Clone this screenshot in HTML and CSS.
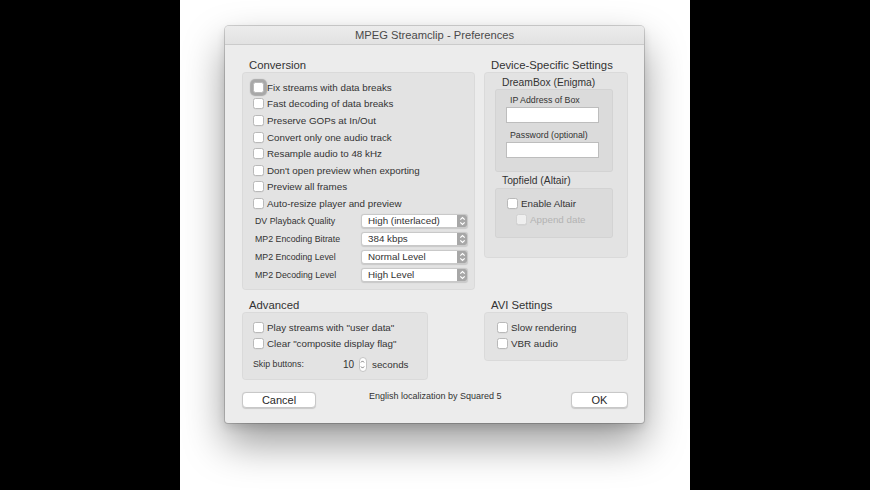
FILE: index.html
```html
<!DOCTYPE html>
<html lang="en">
<head>
    <meta charset="UTF-8">
    <title>MPEG Streamclip - Preferences</title>
    <link rel="stylesheet" href="styles.css">
</head>
<body>
<div class="stage">
    <div class="side"></div>

    <div class="canvas">
        <!-- Preferences window -->
        <div class="window">
            <div class="titlebar">MPEG Streamclip - Preferences</div>

            <div class="content">
                <div class="groups">

                    <!-- Conversion -->
                    <section class="group">
                        <h2>Conversion</h2>
                        <div class="box conversion">
                            <div class="row"><span class="check focus"></span>Fix streams with data breaks</div>
                            <div class="row"><span class="check"></span>Fast decoding of data breaks</div>
                            <div class="row"><span class="check"></span>Preserve GOPs at In/Out</div>
                            <div class="row"><span class="check"></span>Convert only one audio track</div>
                            <div class="row"><span class="check"></span>Resample audio to 48 kHz</div>
                            <div class="row"><span class="check"></span>Don't open preview when exporting</div>
                            <div class="row"><span class="check"></span>Preview all frames</div>
                            <div class="row"><span class="check"></span>Auto-resize player and preview</div>

                            <div class="popup-row">
                                <label>DV Playback Quality</label>
                                <div class="popup"><span>High (interlaced)</span>
                                    <svg class="arrows" viewBox="0 0 11 14"><path d="M3.3 5.6L5.5 3.5L7.7 5.6M3.3 8.4L5.5 10.5L7.7 8.4"/></svg>
                                </div>
                            </div>
                            <div class="popup-row">
                                <label>MP2 Encoding Bitrate</label>
                                <div class="popup"><span>384 kbps</span>
                                    <svg class="arrows" viewBox="0 0 11 14"><path d="M3.3 5.6L5.5 3.5L7.7 5.6M3.3 8.4L5.5 10.5L7.7 8.4"/></svg>
                                </div>
                            </div>
                            <div class="popup-row">
                                <label>MP2 Encoding Level</label>
                                <div class="popup"><span>Normal Level</span>
                                    <svg class="arrows" viewBox="0 0 11 14"><path d="M3.3 5.6L5.5 3.5L7.7 5.6M3.3 8.4L5.5 10.5L7.7 8.4"/></svg>
                                </div>
                            </div>
                            <div class="popup-row">
                                <label>MP2 Decoding Level</label>
                                <div class="popup"><span>High Level</span>
                                    <svg class="arrows" viewBox="0 0 11 14"><path d="M3.3 5.6L5.5 3.5L7.7 5.6M3.3 8.4L5.5 10.5L7.7 8.4"/></svg>
                                </div>
                            </div>
                        </div>
                    </section>

                    <!-- Device-Specific Settings -->
                    <section class="group">
                        <h2>Device-Specific Settings</h2>
                        <div class="box device">
                            <h3>DreamBox (Enigma)</h3>
                            <div class="subbox dreambox">
                                <div class="field-label">IP Address of Box</div>
                                <div class="field"></div>
                                <div class="field-label second">Password (optional)</div>
                                <div class="field"></div>
                            </div>

                            <h3 class="topfield">Topfield (Altair)</h3>
                            <div class="subbox altair">
                                <div class="row"><span class="check"></span>Enable Altair</div>
                                <div class="row disabled indent"><span class="check"></span>Append date</div>
                            </div>
                        </div>
                    </section>

                    <!-- Advanced -->
                    <section class="group">
                        <h2>Advanced</h2>
                        <div class="box advanced">
                            <div class="row"><span class="check"></span>Play streams with "user data"</div>
                            <div class="row"><span class="check"></span>Clear "composite display flag"</div>
                            <div class="skip-row">
                                <span class="skip-label">Skip buttons:</span>
                                <span class="skip-value">10</span>
                                <span class="stepper">
                                    <svg viewBox="0 0 8 15"><path d="M2.2 5.2L4 3.4L5.8 5.2M2.2 9.8L4 11.6L5.8 9.8"/></svg>
                                </span>
                                <span class="skip-unit">seconds</span>
                            </div>
                        </div>
                    </section>

                    <!-- AVI Settings -->
                    <section class="group">
                        <h2>AVI Settings</h2>
                        <div class="box avi">
                            <div class="row"><span class="check"></span>Slow rendering</div>
                            <div class="row"><span class="check"></span>VBR audio</div>
                        </div>
                    </section>
                </div>

                <div class="footer">
                    <button class="btn cancel">Cancel</button>
                    <div class="credit">English localization by Squared 5</div>
                    <button class="btn ok">OK</button>
                </div>
            </div>
        </div>
    </div>

    <div class="side"></div>
</div>
</body>
</html>
```

FILE: styles.css
```css
/* Page */
body {
    margin: 0;
    font-family: "Liberation Sans", Arial, sans-serif;
    color: #2a2a2a;
    overflow: hidden;
}

.stage {
    display: flex;
    height: 490px;
}
.side {
    width: 180px;
    background-color: #000;
}
.canvas {
    width: 510px;
    background-color: #fff;
    padding: 26px 0 0 45px;
    box-sizing: border-box;
}

/* Window */
.window {
    width: 419px;
    height: 397px;
    box-sizing: border-box;
    background-color: #ececec;
    border-radius: 4px 4px 3px 3px;
    box-shadow: 0 0 0 1px rgba(0, 0, 0, 0.16),
                0 20px 42px rgba(0, 0, 0, 0.4),
                0 4px 10px rgba(0, 0, 0, 0.12);
    overflow: hidden;
}
.titlebar {
    height: 18px;
    line-height: 19px;
    text-align: center;
    font-size: 11.2px;
    color: #4a4a4a;
    background: linear-gradient(#ececec, #e2e2e2);
    border-bottom: 1px solid #cbcbcb;
}
.content {
    padding: 13px 16px 16px 17px;
}

/* Groups */
.groups {
    display: grid;
    grid-template-columns: 233px 144px;
    column-gap: 9px;
    row-gap: 8px;
    align-items: start;
}
.group h2 {
    margin: 0 0 0 7px;
    font-size: 11.3px;
    font-weight: normal;
    line-height: 14px;
    color: #333;
}
.box {
    background-color: rgba(0, 0, 0, 0.035);
    border: 1px solid rgba(0, 0, 0, 0.045);
    border-radius: 4px;
}
.conversion {
    padding: 6px 6px 5px 10px;
}
.advanced {
    width: 186px;
    box-sizing: border-box;
    padding: 6px 6px 6px 10px;
}
.avi {
    padding: 6px 6px 8px 12px;
}
.device {
    padding: 4px 14px 19px 10px;
}

/* Checkbox rows */
.row {
    display: flex;
    align-items: center;
    height: 16.6px;
    font-size: 9.8px;
    color: #333;
    white-space: nowrap;
}
.check {
    width: 11px;
    height: 11px;
    box-sizing: border-box;
    margin-right: 3px;
    background-color: #fff;
    border: 1px solid #b9b9b9;
    border-radius: 2.5px;
    box-shadow: 0 0.5px 0 rgba(0, 0, 0, 0.06);
    flex-shrink: 0;
}
.check.focus {
    box-shadow: 0 0 1px 2.5px rgba(120, 120, 120, 0.55);
}
.row.disabled {
    color: #b3b3b3;
}
.row.disabled .check {
    background-color: #efefef;
    border-color: #d2d2d2;
}
.row.indent {
    padding-left: 9px;
}

/* Popup rows */
.popup-row {
    display: flex;
    align-items: center;
    height: 18px;
    padding-left: 2px;
}
.popup-row label {
    width: 106px;
    font-size: 8.8px;
    color: #333;
}
.popup {
    position: relative;
    width: 107px;
    height: 14px;
    box-sizing: border-box;
    background-color: #fff;
    border: 1px solid #c9c9c9;
    border-radius: 3px;
    box-shadow: 0 0.5px 1px rgba(0, 0, 0, 0.12);
    font-size: 9.8px;
    line-height: 12px;
    color: #333;
    padding-left: 6px;
    overflow: hidden;
}
.popup .arrows {
    position: absolute;
    top: -1px;
    right: -1px;
    width: 11px;
    height: 14px;
    background-color: #a7a7a7;
    border-radius: 0 3px 3px 0;
}
.arrows path {
    fill: none;
    stroke: #fff;
    stroke-width: 1.2;
}

/* Device-specific */
.device h3 {
    margin: 0 0 0 7px;
    font-size: 10.3px;
    font-weight: normal;
    line-height: 12px;
    color: #333;
}
.device h3.topfield {
    margin-top: 3px;
}
.subbox {
    width: 118px;
    box-sizing: border-box;
    background-color: rgba(0, 0, 0, 0.035);
    border: 1px solid rgba(0, 0, 0, 0.04);
    border-radius: 3px;
}
.dreambox {
    height: 83px;
    padding: 5px 10px 0 10px;
}
.altair {
    height: 50px;
    margin-top: 1px;
    padding: 6px 6px 0 11px;
}
.field-label {
    margin-left: 4px;
    font-size: 8.8px;
    line-height: 11px;
    color: #333;
}
.field-label.second {
    margin-top: 7px;
}
.field {
    width: 93px;
    height: 16px;
    box-sizing: border-box;
    margin-top: 1px;
    background-color: #fff;
    border: 1px solid #bdbdbd;
}

/* Skip buttons row */
.skip-row {
    display: flex;
    align-items: center;
    height: 17px;
    margin-top: 4px;
    color: #333;
}
.skip-label {
    width: 90px;
    font-size: 8.8px;
}
.skip-value {
    font-size: 10px;
    width: 11px;
}
.stepper {
    width: 8px;
    height: 15px;
    margin: 0 5px 0 5px;
    box-sizing: border-box;
    background-color: #fff;
    border: 1px solid #c4c4c4;
    border-radius: 4px;
    display: flex;
}
.stepper svg {
    width: 8px;
    height: 15px;
    margin-left: -1px;
    margin-top: -1px;
}
.stepper path {
    fill: none;
    stroke: #6a6a6a;
    stroke-width: 1;
}
.skip-unit {
    font-size: 9.8px;
}

/* Footer */
.footer {
    display: flex;
    align-items: flex-start;
    margin-top: 12px;
}
.btn {
    height: 16px;
    padding: 0;
    font-family: "Liberation Sans", Arial, sans-serif;
    font-size: 11px;
    color: #2a2a2a;
    background-color: #fff;
    border: 1px solid #c8c8c8;
    border-radius: 4px;
    box-shadow: 0 0.5px 1px rgba(0, 0, 0, 0.15);
}
.cancel {
    width: 74px;
}
.ok {
    width: 57px;
    margin-left: -1px;
}
.credit {
    flex: 1;
    padding-left: 53px;
    font-size: 9px;
    line-height: 9px;
    color: #333;
}
```
